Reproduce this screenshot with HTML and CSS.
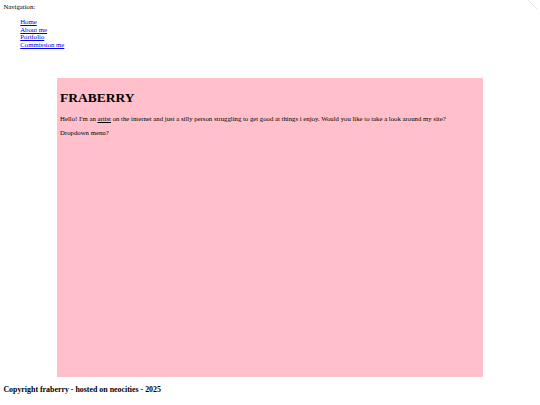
FILE: index.html
```html
<!DOCTYPE html>
<html>
<head>
<meta charset="utf-8">
<title>Fraberry</title>
<link rel="stylesheet" href="styles.css">
</head>
<body>
<nav class="nav">
Navigation:
<ul class="nav-list">
<li><a href="#">Home</a></li>
<li><a href="#">About me</a></li>
<li><a href="#">Portfolio</a></li>
<li><a href="#">Commission me</a></li>
</ul>
</nav>
<main class="content">
<h1 class="title">FRABERRY</h1>
<p class="text">Hello! I'm an <span class="under">artist</span> on the internet and just a silly person struggling to get good at things i enjoy. Would you like to take a look around my site?</p>
<p class="text">Dropdown menu?</p>
</main>
<footer class="footer">Copyright fraberry - hosted on neocities - 2025</footer>
<svg class="corner" width="12" height="10" viewBox="0 0 12 10"><line x1="1" y1="0" x2="10" y2="9" stroke="#e6e6e6" stroke-width="1"/></svg>
</body>
</html>
```
FILE: styles.css
```css
html {
  background: #ffffff;
}
body {
  margin: 3.375px;
  font-family: "Liberation Serif", "Times New Roman", serif;
  font-size: 6.75px;
  color: #000000;
}
.nav {
  line-height: 7.7px;
}
.nav-list {
  margin: 6.75px 0;
  padding-left: 16.875px;
  list-style: none;
}
.nav-list a {
  color: #0000ee;
}
.content {
  width: 80%;
  margin: 29px auto 0;
  padding: 3.375px;
  box-sizing: border-box;
  height: 299px;
  background: #ffc0cb;
}
.title {
  font-size: 13.5px;
  margin: 9px 0;
}
.text {
  margin: 6.75px 0;
}
.under {
  text-decoration: underline;
}
.footer {
  font-weight: bold;
  font-size: 7.9px;
  margin-top: 7.9px;
}
.corner {
  position: absolute;
  top: 0;
  right: 1px;
}
```
